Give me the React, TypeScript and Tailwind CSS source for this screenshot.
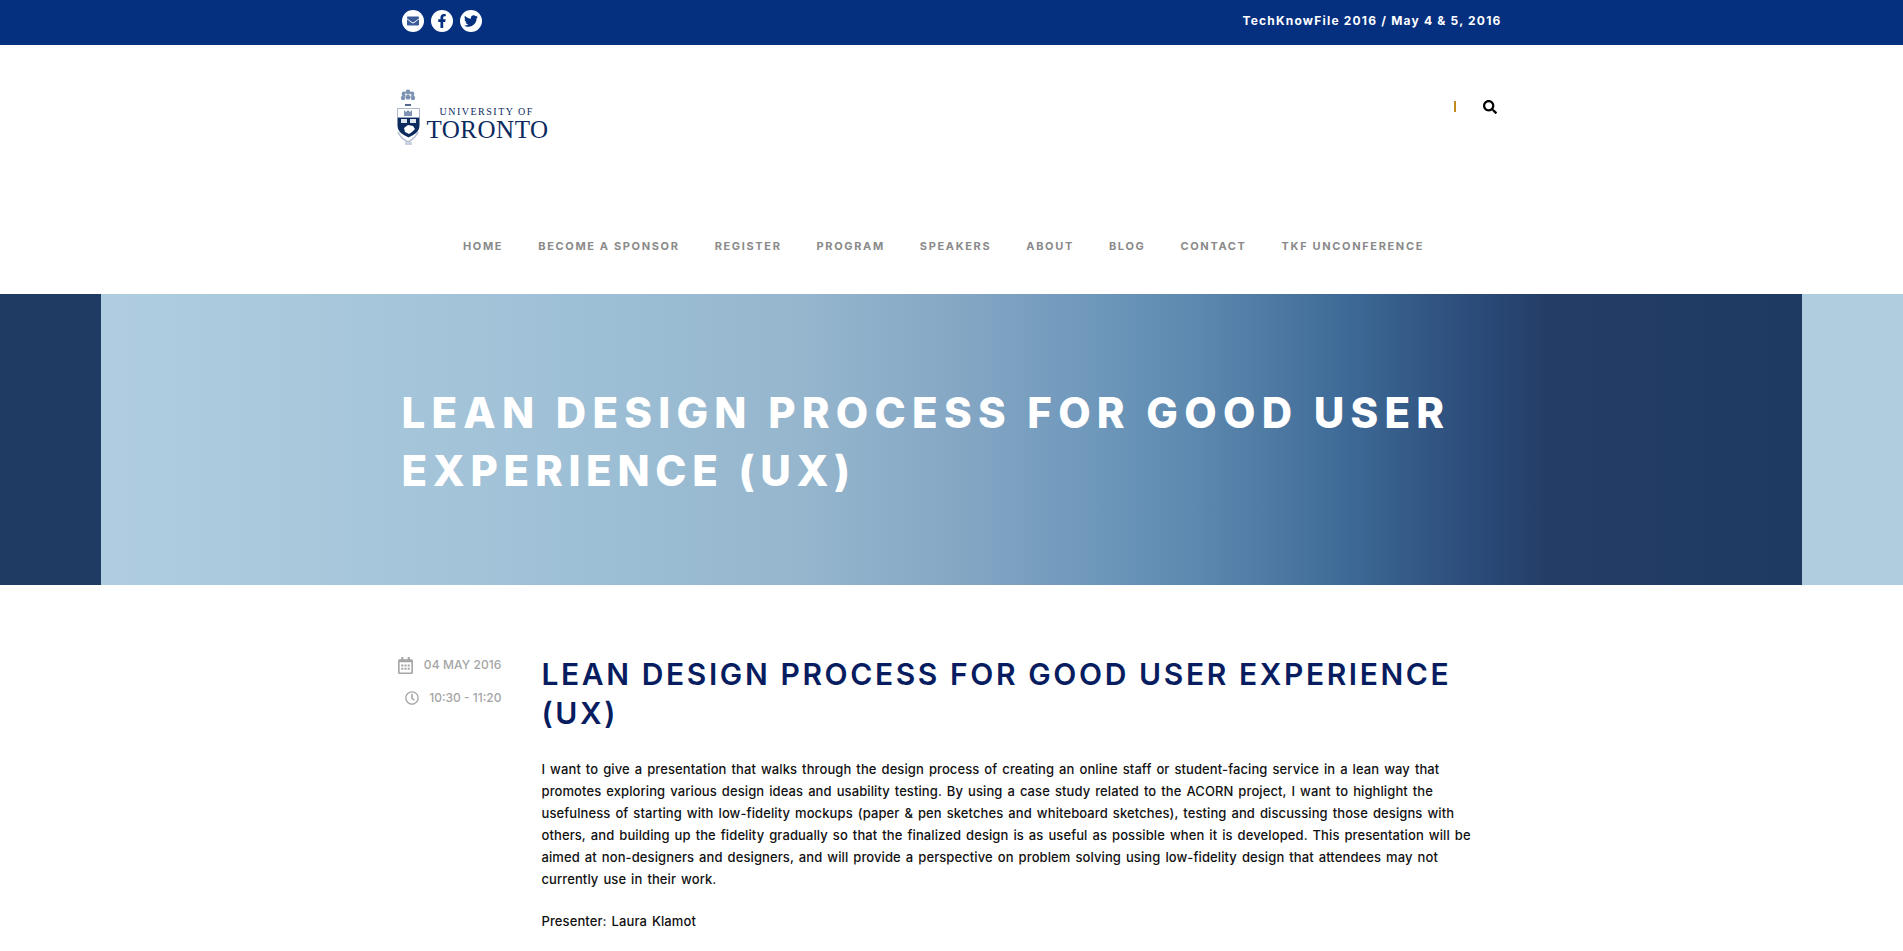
import { FaEnvelope, FaFacebookF, FaTwitter, FaSearch, FaRegClock, FaRegCalendarAlt } from "react-icons/fa"

const navItems = ["HOME", "BECOME A SPONSOR", "REGISTER", "PROGRAM", "SPEAKERS", "ABOUT", "BLOG", "CONTACT", "TKF UNCONFERENCE"]

const Logo = () => (
    <div className="flex items-start gap-[6px]">
        <svg width="24" height="58" viewBox="0 0 24 58">
            {/* tree on top of the crest */}
            <g fill="#7e93b3">
                <circle cx="7" cy="6" r="2.4" />
                <circle cx="11" cy="4" r="2.4" />
                <circle cx="15" cy="6" r="2.4" />
                <circle cx="6" cy="10" r="2.2" />
                <circle cx="11" cy="9" r="2.6" />
                <circle cx="16" cy="10" r="2.2" />
            </g>
            <circle cx="9" cy="6.5" r="0.9" fill="#fff" />
            <circle cx="13.5" cy="7" r="0.9" fill="#fff" />
            <path d="M8 16h6v2H8z" fill="#52698f" />
            {/* shield */}
            <path d="M0.5 20.5h22v17c0 6-5 9-11 12-6-3-11-6-11-12z" fill="#0b2a5e" />
            <path d="M0.5 20.5h22v9h-22z" fill="#fff" stroke="#9aa9c1" strokeWidth="0.6" />
            <path d="M7 22l2 2 2-2 2 2 2-2v6H7z" fill="#7e93b3" />
            <path d="M4 31h6v4H4zM13 31h6v4h-6z" fill="#dfe5ee" />
            <path d="M7 40l4-3 5 1 2 3-3 3-3 2-4-2z" fill="#fff" />
            {/* scroll below the shield */}
            <path d="M1 44c2 5 6 8 10 10 4-2 8-5 10-10" fill="none" stroke="#b7c3d5" strokeWidth="1.6" />
            <path d="M8 54h7v3H8z" fill="#c9d2e0" />
        </svg>
        <div className="pt-[18px] font-['Liberation_Serif',serif] text-[#0b2a5e]">
            <div className="pl-[13px] text-[10px] leading-[11px] tracking-[1.5px]">UNIVERSITY OF</div>
            <div className="text-[25px] leading-[25px] tracking-[0.5px]">TORONTO</div>
        </div>
    </div>
)

export default function App() {
    return (
        <div className="min-h-[951px] bg-white font-['Inter',sans-serif]">
            <div className="h-[45px] bg-[#052f7f]">
                <div className="mx-auto flex h-full w-[1100px] items-center justify-between pb-[3px]">
                    <div className="flex gap-[7px]">
                        <div className="flex h-[22px] w-[22px] items-center justify-center rounded-full bg-white text-[12px] text-[#3a5a98]">
                            <FaEnvelope />
                        </div>
                        <div className="flex h-[22px] w-[22px] items-center justify-center rounded-full bg-white text-[14px] text-[#052f7f]">
                            <FaFacebookF />
                        </div>
                        <div className="flex h-[22px] w-[22px] items-center justify-center rounded-full bg-white text-[14px] text-[#052f7f]">
                            <FaTwitter />
                        </div>
                    </div>
                    <div className="text-[12px] font-bold tracking-[1.2px] text-white">TechKnowFile 2016 / May 4 &amp; 5, 2016</div>
                </div>
            </div>
            <div className="mx-auto flex h-[157px] w-[1100px] justify-between">
                <div className="ml-[-5px] pt-[43px]">
                    <Logo />
                </div>
                <div className="flex items-start gap-[27px] pt-[55px] pr-[5px]">
                    <div className="mt-[1px] h-[11px] w-[2px] bg-[#c08a1e]" />
                    <FaSearch className="text-[14px] text-black" />
                </div>
            </div>
            <nav className="flex h-[92px] justify-center gap-[35px] pt-[37px] pr-[16px] text-[11px] leading-[14px] font-bold tracking-[1.65px] text-[#8a8a8a]">
                {navItems.map((item) => (
                    <a key={item} href="#">
                        {item}
                    </a>
                ))}
            </nav>
            <div className="h-[291px] bg-[linear-gradient(to_right,#1f3b64_0,#1f3b64_101px,#b0cde0_101px,#a9c8dc_300px,#9dbfd5_600px,#95b6cd_800px,#86a8c5_950px,#6f98bb_1090px,#5c88af_1200px,#3f6b98_1340px,#2a4a78_1480px,#243d66_1550px,#1e3a62_1802px,#b0cde0_1802px,#b0cde0_100%)]">
                <div className="mx-auto w-[1100px] pt-[90px] text-[42px] leading-[58px] font-extrabold text-white">
                    <div className="tracking-[6.25px]">LEAN DESIGN PROCESS FOR GOOD USER</div>
                    <div className="tracking-[5.7px]">EXPERIENCE (UX)</div>
                </div>
            </div>
            <div className="mx-auto flex w-[1100px] pt-[71px]">
                <div className="flex w-[100px] shrink-0 flex-col items-end gap-[15px] text-[12px] leading-[18px] font-medium whitespace-nowrap text-[#a5a5a5]">
                    <div className="flex items-center gap-[10px]">
                        <FaRegCalendarAlt className="text-[17px]" />
                        <span className="tracking-[0.1px]">04 MAY 2016</span>
                    </div>
                    <div className="flex items-center gap-[10px]">
                        <FaRegClock className="text-[14px]" />
                        <span>10:30 - 11:20</span>
                    </div>
                </div>
                <div className="mt-[-1px] ml-[39px]">
                    <h2 className="ml-[1px] text-[30px] leading-[39px] font-semibold tracking-[2.6px] text-[#071d5f]">
                        LEAN DESIGN PROCESS FOR GOOD USER EXPERIENCE
                        <br />
                        (UX)
                    </h2>
                    <p className="mt-[25px] ml-[1px] text-[13px] leading-[22px] font-medium tracking-[0.1px] [word-spacing:1.4px] text-[#111]">
                        I want to give a presentation that walks through the design process of creating an online staff or student-facing service in a lean way that
                        <br />
                        promotes exploring various design ideas and usability testing. By using a case study related to the ACORN project, I want to highlight the
                        <br />
                        usefulness of starting with low-fidelity mockups (paper &amp; pen sketches and whiteboard sketches), testing and discussing those designs with
                        <br />
                        others, and building up the fidelity gradually so that the finalized design is as useful as possible when it is developed. This presentation will be
                        <br />
                        aimed at non-designers and designers, and will provide a perspective on problem solving using low-fidelity design that attendees may not
                        <br />
                        currently use in their work.
                    </p>
                    <p className="mt-[20px] ml-[1px] text-[13px] leading-[22px] font-medium tracking-[0.1px] [word-spacing:1.4px] text-[#111]">Presenter: Laura Klamot</p>
                </div>
            </div>
        </div>
    )
}
